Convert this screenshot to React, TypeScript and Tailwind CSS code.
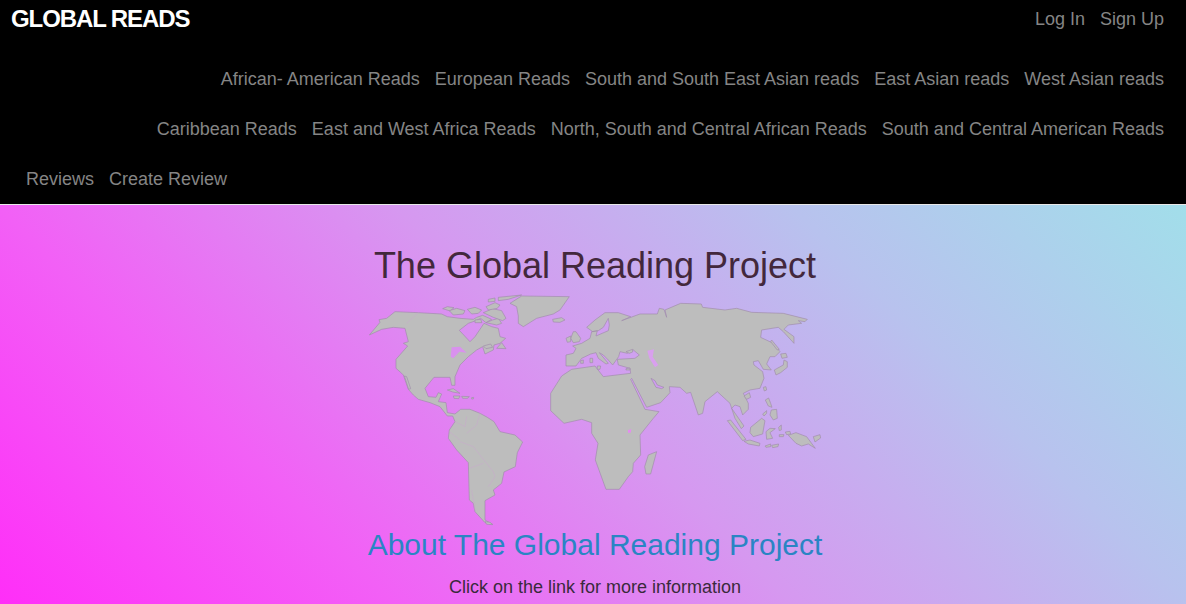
const link = "text-[#858585] px-[7.5px] whitespace-nowrap";

const americas = [
  // North America
  "M28 135 L60 97 L57 89 L80 85 L105 65 L175 68 L245 72 L262 80 L300 85 L340 88 L350 82 L368 76 L395 88 L378 98 L362 85 L345 93 L325 100 L298 121 L330 155 L345 140 L372 100 L395 110 L415 115 L420 140 L437 145 L420 160 L402 165 L400 180 L375 192 L368 170 L350 180 L325 200 L300 225 L285 260 L285 286 L275 286 L270 262 L222 262 L195 295 L205 320 L228 322 L235 308 L245 312 L235 335 L258 338 L262 368 L285 372 L302 358 L330 358 L360 370 L382 382 L402 395 L420 425 L465 435 L488 456 L472 488 L466 530 L432 546 L425 580 L400 600 L405 615 L375 632 L375 690 L398 703 L375 698 L345 665 L340 640 L328 630 L325 518 L290 480 L265 445 L268 420 L285 395 L278 378 L262 378 L240 350 L210 338 L175 328 L160 315 L145 298 L130 255 L125 250 L108 235 L108 208 L143 168 L130 160 L145 155 L135 115 L100 112 L65 118 Z",
  // Baja
  "M133 258 L140 260 L152 296 L146 298 Z",
  // Greenland
  "M450 40 L485 18 L628 20 L600 60 L580 72 L530 85 L490 110 L475 100 L475 78 L470 50 Z",
  // Arctic islands
  "M248 56 L262 50 L282 53 L270 63 Z",
  "M268 62 L290 55 L315 62 L310 72 L280 75 Z",
  "M322 58 L345 52 L365 60 L355 70 L335 72 Z",
  "M345 90 L362 88 L366 98 L345 98 Z",
  "M378 98 L398 90 L415 85 L425 100 L410 105 Z",
  "M370 68 L398 56 L425 62 L438 85 L428 92 L400 82 Z",
  "M378 50 L405 38 L420 45 L412 55 L385 60 Z",
  "M385 28 L405 24 L405 34 L385 36 Z",
  "M415 22 L485 15 L445 28 L415 32 Z",
  "M370 168 L392 162 L398 172 L378 176 Z",
  "M410 175 L425 158 L438 176 Z",
  // Caribbean
  "M262 300 L280 296 L300 310 L278 306 Z",
  "M280 318 L300 318 L296 326 L282 325 Z",
  "M305 319 L328 320 L322 325 L308 325 Z",
  "M335 323 L341 322 L340 327 L335 327 Z",
  // Iceland
  "M578 88 L605 83 L615 90 L600 97 L580 96 Z",
  // Tierra del Fuego
  "M375 695 L390 697 L398 704 L380 703 Z",
];

const americasBorders = [
  "M140 100 L175 68",
  "M285 395 L315 410 L320 380 M320 430 L350 405 L360 370 M300 455 L340 470 L380 520 L400 545 L405 560 L385 590 M268 425 L300 450 M328 535 L370 520 M335 600 L345 660",
];

const afroEurasia =
  "M78 195 L100 190 L108 175 L98 168 L125 160 L150 145 L155 125 L172 122 L168 138 L205 122 L208 105 L205 85 L190 112 L175 122 L158 125 L140 112 L165 90 L195 68 L235 68 L272 80 L245 92 L300 72 L352 72 L358 55 L372 58 L380 82 L375 60 L422 40 L484 42 L488 52 L555 60 L590 55 L635 67 L730 70 L802 88 L795 95 L775 92 L785 100 L745 105 L732 118 L762 140 L762 160 L730 125 L715 112 L665 120 L662 142 L700 160 L720 185 L705 200 L690 200 L680 222 L694 240 L670 238 L655 212 L640 215 L642 225 L668 245 L672 265 L660 295 L630 300 L610 310 L625 340 L625 358 L608 375 L600 350 L585 345 L575 355 L612 408 L604 416 L585 385 L570 340 L532 305 L495 335 L488 370 L475 375 L452 307 L440 310 L420 292 L388 290 L390 308 L362 338 L320 352 L275 265 L272 268 L315 358 L357 365 L340 385 L300 435 L302 495 L280 520 L278 545 L265 560 L238 598 L198 598 L166 510 L174 460 L155 430 L155 398 L125 388 L72 400 L32 362 L32 310 L65 258 L95 238 L165 228 L190 260 L205 258 L272 250 L270 235 L235 225 L232 208 L285 205 L298 195 L280 180 L262 190 L240 185 L236 200 L218 225 L205 210 L190 195 L178 188 L205 220 L198 222 L175 205 L168 188 L152 192 L125 205 L108 228 L78 228 Z";

const islands = [
  // Madagascar
  "M350 485 L332 552 L318 552 L314 530 L325 495 Z",
  // UK, Ireland
  "M92 145 L100 125 L108 125 L122 145 L118 155 L100 158 Z",
  "M78 145 L92 138 L92 155 L82 157 Z",
  // Mediterranean islands
  "M150 205 L158 205 L158 218 L150 218 Z",
  "M122 212 L130 210 L130 220 L122 220 Z",
  "M172 228 L182 228 L180 238 L172 238 Z",
  "M258 236 L270 234 L270 240 L258 240 Z",
  "M258 185 L278 178 L278 186 L268 190 Z",
  // Japan
  "M703 240 L730 225 L732 210 L742 215 L742 232 L722 248 L708 255 Z",
  "M722 192 L738 190 L742 202 L726 205 Z",
  "M695 150 L718 178 L712 180 L692 155 Z",
  // Taiwan, Hainan
  "M670 292 L678 290 L680 300 L673 303 Z",
  "M612 318 L628 308 L632 322 L620 328 Z",
  // Philippines
  "M676 330 L686 324 L692 340 L696 352 L685 348 Z",
  "M694 360 L710 358 L712 385 L700 390 L690 375 Z",
  "M668 372 L680 362 L680 370 L672 378 Z",
  // Sumatra
  "M562 392 L572 390 L618 448 L608 452 Z",
  // Borneo
  "M632 412 L665 385 L675 392 L668 432 L640 440 L630 428 Z",
  // Sulawesi
  "M678 425 L690 415 L706 416 L690 428 L698 445 L680 448 Z",
  "M716 412 L724 405 L724 420 L718 422 Z",
  // Java
  "M612 454 L630 450 L660 460 L658 468 L625 462 Z",
  "M675 468 L692 462 L692 470 L678 472 Z",
  "M695 466 L716 462 L714 470 L698 473 Z",
  "M718 434 L732 434 L730 440 L718 440 Z",
  "M736 426 L750 424 L752 432 L740 434 Z",
  // New Guinea
  "M745 436 L768 428 L800 440 L826 475 L805 462 L785 468 L768 460 Z",
  "M820 440 L840 434 L842 444 L825 456 Z",
];

export default function App() {
  return (
    <div className="font-['Liberation_Sans',Arial,sans-serif] h-[604px] overflow-hidden flex flex-col text-[18px] text-[#333]">
      <header className="bg-black h-[205px] border-b border-[#e8e8e8] flex flex-col shrink-0">
        <div className="flex justify-between pl-[11px] pr-[14.5px] h-[54px]">
          <span className="font-bold text-white text-[24px] leading-[38px] tracking-[-1.1px]">GLOBAL READS</span>
          <nav className="flex leading-[38px]">
            <span className={link}>Log In</span>
            <span className={link}>Sign Up</span>
          </nav>
        </div>
        <nav className="flex justify-end pr-[14.5px] h-[50px] items-center">
          {["African- American Reads","European Reads","South and South East Asian reads","East Asian reads","West Asian reads"].map(t => <span key={t} className={link}>{t}</span>)}
        </nav>
        <nav className="flex justify-end pr-[14.5px] h-[50px] items-center">
          {["Caribbean Reads","East and West Africa Reads","North, South and Central African Reads","South and Central American Reads"].map(t => <span key={t} className={link}>{t}</span>)}
        </nav>
        <nav className="flex pl-[18.5px] h-[50px] items-center">
          {["Reviews","Create Review"].map(t => <span key={t} className={link}>{t}</span>)}
        </nav>
      </header>
      <main className="flex-1 flex flex-col items-center pl-[4px] bg-[linear-gradient(45deg,#ff2ef8_0%,#f260f6_25%,#d698f0_50%,#b8c2ee_75%,#a2deea_100%)]">
        <h1 className="text-[36px] leading-[40px] mt-[41px] text-[#43283c]">The Global Reading Project</h1>
        <svg viewBox="360 290 470 240" className="w-[470px] h-[240px] mt-[4px] block shrink-0">
          <g fill="#bdbdbd" stroke="#a08cab" strokeWidth="2" strokeLinejoin="round" transform="translate(360 290) scale(0.3333)">
            {americas.map((d, i) => <path key={i} d={d} />)}
            <path d="M275 172 L300 170 L320 188 L298 185 L280 205 L272 200 Z" fill="#d991ee" stroke="none" />
            {americasBorders.map((d, i) => <path key={i} d={d} fill="none" stroke="#c8a8cc" strokeWidth="1.5" />)}
          </g>
          <g fill="#bdbdbd" stroke="#a08cab" strokeWidth="2" strokeLinejoin="round" transform="translate(540 290) scale(0.3333)">
            <path d={afroEurasia} />
            {islands.map((d, i) => <path key={i} d={d} />)}
            <path d="M322 182 L342 178 L338 200 L355 225 L345 232 L328 205 Z" fill="#d9a0ee" stroke="none" />
            <path d="M264 420 L274 418 L272 428 L264 428 Z" fill="#e58cf0" stroke="none" />
            <path d="M333 265 L345 272 L352 285 L372 292 L365 296 L348 292 Z" fill="#cf9cf0" />
          </g>
        </svg>
        <h2 className="text-[30px] leading-[36px] text-[#2a85c4] -mt-[3px]">About The Global Reading Project</h2>
        <p className="mt-[11px] leading-[27px] text-[#3a2a3c]">Click on the link for more information</p>
      </main>
    </div>
  );
}
